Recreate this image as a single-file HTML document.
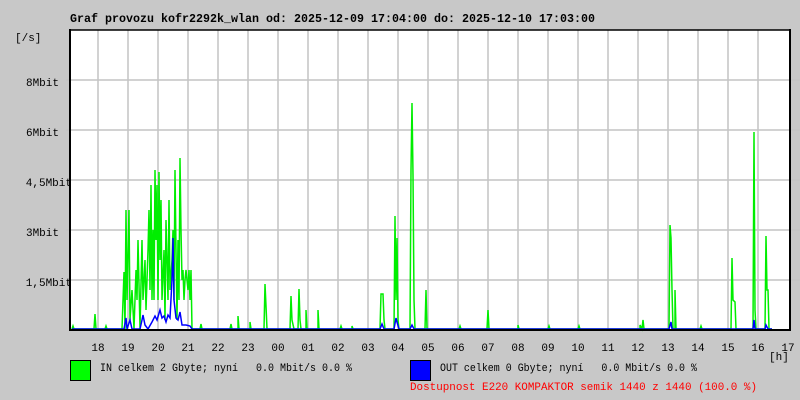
<!DOCTYPE html>
<html><head><meta charset="utf-8"><style>
html,body{margin:0;padding:0;background:#c8c8c8;}
svg{display:block}
text{font-family:"Liberation Mono",monospace;font-size:11px;fill:#000}
</style></head><body>
<svg width="800" height="400" viewBox="0 0 800 400" xmlns="http://www.w3.org/2000/svg">
<rect width="800" height="400" fill="#c8c8c8"/>
<rect x="70" y="30" width="720" height="300" fill="#fff"/>
<g stroke="#c4c4c4" stroke-width="1.5">
<line x1="98" y1="30" x2="98" y2="330"/><line x1="128" y1="30" x2="128" y2="330"/><line x1="158" y1="30" x2="158" y2="330"/><line x1="188" y1="30" x2="188" y2="330"/><line x1="218" y1="30" x2="218" y2="330"/><line x1="248" y1="30" x2="248" y2="330"/><line x1="278" y1="30" x2="278" y2="330"/><line x1="308" y1="30" x2="308" y2="330"/><line x1="338" y1="30" x2="338" y2="330"/><line x1="368" y1="30" x2="368" y2="330"/><line x1="398" y1="30" x2="398" y2="330"/><line x1="428" y1="30" x2="428" y2="330"/><line x1="458" y1="30" x2="458" y2="330"/><line x1="488" y1="30" x2="488" y2="330"/><line x1="518" y1="30" x2="518" y2="330"/><line x1="548" y1="30" x2="548" y2="330"/><line x1="578" y1="30" x2="578" y2="330"/><line x1="608" y1="30" x2="608" y2="330"/><line x1="638" y1="30" x2="638" y2="330"/><line x1="668" y1="30" x2="668" y2="330"/><line x1="698" y1="30" x2="698" y2="330"/><line x1="728" y1="30" x2="728" y2="330"/><line x1="758" y1="30" x2="758" y2="330"/>
<line x1="66" y1="80" x2="800" y2="80"/><line x1="66" y1="130" x2="800" y2="130"/><line x1="66" y1="180" x2="800" y2="180"/><line x1="66" y1="230" x2="800" y2="230"/><line x1="66" y1="280" x2="800" y2="280"/>
</g>
<polyline fill="none" stroke="#00ee00" stroke-width="1.5" points="72,329 73,326 74,329 94,329 95,314 96,329 105,329 106,326 107,329 122,329 124,272 125,329 126,210 127,300 129,210 130,320 132,290 134,329 136,270 137,300 138,240 140,329 142,240 143,300 145,260 146,310 148,250 149,210 150,290 151,185 152,300 153,230 154,300 155,170 156,240 157,185 158,300 159,172 160,260 161,200 162,300 164,250 165,320 166,220 168,300 169,200 170,290 172,260 173,230 174,300 175,170 176,250 177,320 178,240 179,300 180,158 181,230 182,280 183,270 184,300 185,280 186,270 188,290 189,270 190,300 191,270 192,329 200,329 201,324 202,329 230,329 231,324 232,329 238,329 238,316 239,329 250,329 250,322 251,329 264,329 265,284 266,306 267,329 290,329 291,296 292,320 294,329 298,329 299,289 300,320 301,329 306,329 306,310 307,329 318,329 318,310 319,329 340,329 341,326 342,329 352,329 352,326 353,329 380,329 381,294 383,294 384,320 385,329 394,329 395,216 396,300 397,238 398,320 399,329 410,329 411,170 412,103 413,175 414,300 415,329 425,329 426,290 427,329 459,329 460,326 461,329 487,329 488,310 489,329 518,329 518,325 519,329 548,329 549,326 550,329 578,329 579,326 580,329 640,329 640,325 642,329 643,320 644,329 669,329 670,225 671,238 672,290 673,329 675,329 675,290 676,329 700,329 701,326 702,329 731,329 732,258 733,300 735,302 736,329 753,329 754,132 755,310 756,329 765,329 766,236 767,290 768,290 769,329 772,329"/>
<polyline fill="none" stroke="#0000ff" stroke-width="1.5" points="72,329 124,329 126,318 127,329 130,320 132,329 140,329 142,320 143,315 145,325 148,329 152,322 155,316 157,320 160,310 162,318 164,316 166,322 168,315 170,318 172,280 173,238 174,300 176,318 178,320 180,312 182,325 186,325 190,326 192,329 380,329 382,324 384,329 394,329 396,318 397,322 399,329 410,329 412,325 414,329 669,329 671,322 672,329 753,329 754,320 755,329 765,329 766,325 768,329 772,329"/>
<line x1="70" y1="29" x2="70" y2="331" stroke="#000" stroke-width="2"/>
<line x1="69" y1="30" x2="790" y2="30" stroke="#000" stroke-width="1.5"/>
<line x1="790" y1="29" x2="790" y2="331" stroke="#000" stroke-width="2"/>
<line x1="69" y1="330" x2="791" y2="330" stroke="#000" stroke-width="2"/>
<text x="70" y="22" textLength="525" lengthAdjust="spacingAndGlyphs" style="font-weight:bold;font-size:12px">Graf provozu kofr2292k_wlan od: 2025-12-09 17:04:00 do: 2025-12-10 17:03:00</text>
<text x="15" y="41">[/s]</text>
<g text-anchor="end">
<text x="59" y="86">8Mbit</text><text x="59" y="136">6Mbit</text><text x="72" y="186">4,5Mbit</text><text x="59" y="236">3Mbit</text><text x="72" y="286">1,5Mbit</text>
</g>
<g text-anchor="middle">
<text x="98" y="351">18</text><text x="128" y="351">19</text><text x="158" y="351">20</text><text x="188" y="351">21</text><text x="218" y="351">22</text><text x="248" y="351">23</text><text x="278" y="351">00</text><text x="308" y="351">01</text><text x="338" y="351">02</text><text x="368" y="351">03</text><text x="398" y="351">04</text><text x="428" y="351">05</text><text x="458" y="351">06</text><text x="488" y="351">07</text><text x="518" y="351">08</text><text x="548" y="351">09</text><text x="578" y="351">10</text><text x="608" y="351">11</text><text x="638" y="351">12</text><text x="668" y="351">13</text><text x="698" y="351">14</text><text x="728" y="351">15</text><text x="758" y="351">16</text><text x="788" y="351">17</text>
</g>
<text x="769" y="360">[h]</text>
<rect x="70.5" y="360.5" width="20" height="20" fill="#00ff00" stroke="#000"/>
<rect x="410.5" y="360.5" width="20" height="20" fill="#0000ff" stroke="#000"/>
<text x="100" y="371" textLength="252" lengthAdjust="spacingAndGlyphs" xml:space="preserve">IN celkem 2 Gbyte; nyní   0.0 Mbit/s 0.0 %</text>
<text x="440" y="371" textLength="257" lengthAdjust="spacingAndGlyphs" xml:space="preserve">OUT celkem 0 Gbyte; nyní   0.0 Mbit/s 0.0 %</text>
<text x="410" y="390" textLength="347" lengthAdjust="spacingAndGlyphs" style="fill:#ff0000">Dostupnost E220 KOMPAKTOR semik 1440 z 1440 (100.0 %)</text>
</svg>
</body></html>
